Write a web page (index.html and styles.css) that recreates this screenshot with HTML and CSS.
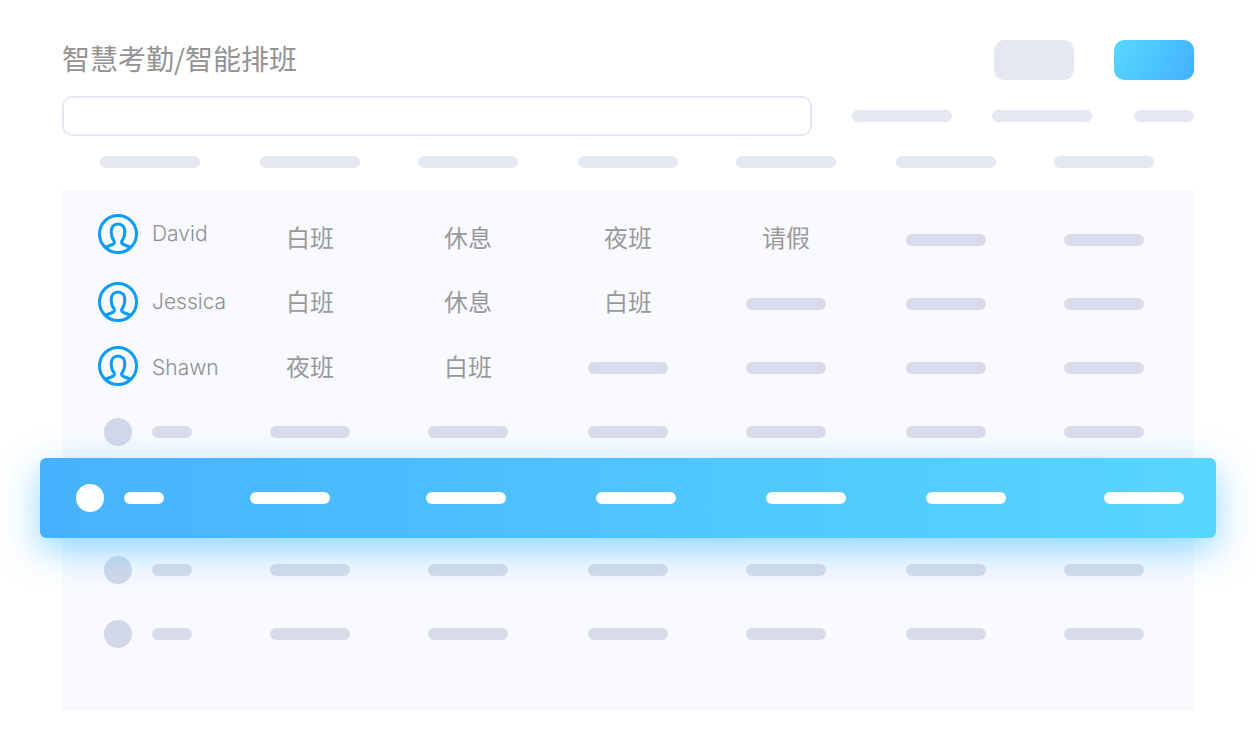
FILE: index.html
```html
<!DOCTYPE html>
<html lang="en">
<head>
	<meta charset="UTF-8">
	<title>智慧考勤/智能排班</title>
	<link rel="stylesheet" href="styles.css">
</head>
<body>
	<svg class="sprite" width="0" height="0">
		<symbol id="user" viewBox="0 0 40 40">
			<circle cx="20" cy="20" r="18.500" fill="none" stroke="#0a9cf5" stroke-width="3"/>
			<path d="M7 33.500L14.500 30.500C16.500 29.700 17 28 15.800 26.500C14.500 24.800 13.200 21.800 13.200 17.500C13.200 13 16 10 20 10S26.800 13 26.800 17.500C26.800 21.800 25.500 24.800 24.200 26.500C23 28 23.500 29.700 25.500 30.500L33 33.500" fill="none" stroke="#0a9cf5" stroke-width="3"/>
		</symbol>
	</svg>
	<div class="wrap">
		<div class="top">
			<h1 class="title">智慧考勤/智能排班</h1>
			<div class="btns">
				<div class="btn"></div>
				<div class="btn btn-blue"></div>
			</div>
		</div>
		<div class="search-row">
			<div class="search"></div>
			<div class="filters">
				<span class="pill w100"></span>
				<span class="pill w100"></span>
				<span class="pill w60"></span>
			</div>
		</div>
		<div class="head">
			<span class="pill w100"></span>
			<span class="pill w100"></span>
			<span class="pill w100"></span>
			<span class="pill w100"></span>
			<span class="pill w100"></span>
			<span class="pill w100"></span>
			<span class="pill w100"></span>
		</div>
		<div class="table">
			<div class="row row1">
				<div class="who">
					<span class="face"><svg class="icon"><use href="#user"/></svg></span>
					<span class="name">David</span>
				</div>
				<div class="cell">白班</div>
				<div class="cell">休息</div>
				<div class="cell">夜班</div>
				<div class="cell">请假</div>
				<div class="cell"><span class="bar"></span></div>
				<div class="cell"><span class="bar"></span></div>
			</div>
			<div class="row row2">
				<div class="who">
					<span class="face"><svg class="icon"><use href="#user"/></svg></span>
					<span class="name">Jessica</span>
				</div>
				<div class="cell">白班</div>
				<div class="cell">休息</div>
				<div class="cell">白班</div>
				<div class="cell"><span class="bar"></span></div>
				<div class="cell"><span class="bar"></span></div>
				<div class="cell"><span class="bar"></span></div>
			</div>
			<div class="row row3">
				<div class="who">
					<span class="face"><svg class="icon"><use href="#user"/></svg></span>
					<span class="name">Shawn</span>
				</div>
				<div class="cell">夜班</div>
				<div class="cell">白班</div>
				<div class="cell"><span class="bar"></span></div>
				<div class="cell"><span class="bar"></span></div>
				<div class="cell"><span class="bar"></span></div>
				<div class="cell"><span class="bar"></span></div>
			</div>
			<div class="row">
				<div class="who">
					<span class="face"><span class="dot"></span></span>
					<span class="bar short"></span>
				</div>
				<div class="cell"><span class="bar"></span></div>
				<div class="cell"><span class="bar"></span></div>
				<div class="cell"><span class="bar"></span></div>
				<div class="cell"><span class="bar"></span></div>
				<div class="cell"><span class="bar"></span></div>
				<div class="cell"><span class="bar"></span></div>
			</div>
			<div class="hot">
				<div class="hot-who">
					<span class="dot"></span>
					<span class="bar short"></span>
				</div>
				<span class="bar"></span>
				<span class="bar"></span>
				<span class="bar"></span>
				<span class="bar"></span>
				<span class="bar"></span>
				<span class="bar"></span>
			</div>
			<div class="row">
				<div class="who">
					<span class="face"><span class="dot"></span></span>
					<span class="bar short"></span>
				</div>
				<div class="cell"><span class="bar"></span></div>
				<div class="cell"><span class="bar"></span></div>
				<div class="cell"><span class="bar"></span></div>
				<div class="cell"><span class="bar"></span></div>
				<div class="cell"><span class="bar"></span></div>
				<div class="cell"><span class="bar"></span></div>
			</div>
			<div class="row">
				<div class="who">
					<span class="face"><span class="dot"></span></span>
					<span class="bar short"></span>
				</div>
				<div class="cell"><span class="bar"></span></div>
				<div class="cell"><span class="bar"></span></div>
				<div class="cell"><span class="bar"></span></div>
				<div class="cell"><span class="bar"></span></div>
				<div class="cell"><span class="bar"></span></div>
				<div class="cell"><span class="bar"></span></div>
			</div>
		</div>
	</div>
</body>
</html>
```
FILE: styles.css
```css
body{
	margin: 0;
	background-color: #fff;
	font-family: "Noto Sans CJK SC", "Noto Sans", sans-serif;
	color: #999;
}
.sprite{
	display: block;
}
.wrap{
	width: 1132px;
	padding: 40px 62px;
}
.top{
	height: 40px;
	display: flex;
	justify-content: space-between;
	align-items: center;
}
.title{
	margin: 0 0 4px;
	font-size: 28px;
	font-weight: 400;
	line-height: 36px;
	color: #939393;
}
.btns{
	display: flex;
	gap: 40px;
}
.btn{
	width: 80px;
	height: 40px;
	border-radius: 10px;
	background-color: #e4e8f3;
}
.btn-blue{
	background: linear-gradient(120deg, #5ad8ff, #40b0ff);
}
.search-row{
	margin-top: 16px;
	height: 40px;
	display: flex;
	justify-content: space-between;
	align-items: center;
}
.search{
	width: 750px;
	height: 40px;
	box-sizing: border-box;
	border: 2px solid #e4e8f3;
	border-radius: 10px;
}
.filters{
	width: 342px;
	display: flex;
	gap: 40px;
}
.pill{
	display: block;
	height: 12px;
	border-radius: 6px;
	background-color: #e4e8f3;
}
.filters .w60{
	margin-left: 2px;
}
.w100{
	width: 100px;
}
.w60{
	width: 60px;
}
.head{
	margin-top: 20px;
	padding-left: 38px;
	height: 12px;
	display: grid;
	grid-template-columns: 160px 158px 160px 158px 160px 158px 100px;
}
.table{
	margin-top: 22px;
	padding: 18px 0 44px;
	background-color: #f9faff;
}
.row{
	height: 64px;
	padding-left: 36px;
	display: grid;
	grid-template-columns: 162px 158px 160px 158px 160px 158px 100px;
	align-items: center;
}
.who{
	display: flex;
	align-items: center;
	gap: 14px;
}
.face{
	width: 40px;
	height: 40px;
	display: flex;
	align-items: center;
	justify-content: center;
}
.icon{
	width: 40px;
	height: 40px;
}
.dot{
	display: block;
	width: 28px;
	height: 28px;
	border-radius: 50%;
	background-color: #d2d8e9;
}
.name{
	font-family: Inter, sans-serif;
	font-size: 21px;
	line-height: 40px;
	font-weight: 300;
	color: #8f8f8f;
}
.cell{
	width: 100px;
	display: flex;
	justify-content: center;
	font-size: 24px;
	line-height: 34px;
}
.bar{
	display: block;
	width: 80px;
	height: 12px;
	border-radius: 6px;
	background-color: #d8dcea;
}
.short{
	width: 40px;
}
/* text rows sit a little above the bars */
.row1 .who{
	margin-bottom: 12px;
}
.row2 .who, .row3 .who{
	margin-bottom: 4px;
}
.row3 .name{
	margin-top: 4px;
}
.row1 .cell:not(:nth-last-child(-n+2)){
	margin-bottom: 6px;
}
.row2 .cell:nth-child(-n+4){
	margin-bottom: 6px;
}
.row3 .cell:nth-child(-n+3){
	margin-bottom: 4px;
}
.hot{
	position: relative;
	z-index: 2;
	height: 80px;
	margin: -6px -22px 0;
	padding-left: 36px;
	border-radius: 6px;
	display: grid;
	grid-template-columns: 174px 176px 170px 170px 160px 178px 80px;
	align-items: center;
	background: linear-gradient(90deg, #46b2ff, #57d6ff);
	box-shadow: 0 12px 36px rgba(70, 190, 255, .6);
}
.hot-who{
	display: flex;
	align-items: center;
	gap: 20px;
}
.hot .dot, .hot .bar{
	background-color: #fff;
}
```
